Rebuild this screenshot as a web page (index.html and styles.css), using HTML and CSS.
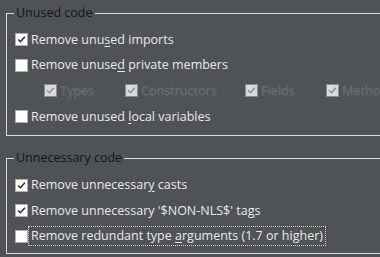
FILE: index.html
```html
<!DOCTYPE html>
<html>
<head>
<meta charset="utf-8">
<link rel="stylesheet" href="styles.css">
</head>
<body>
<fieldset class="group g1">
  <legend class="legend">Unused code</legend>
  <div class="row">
    <span class="box checked"><svg viewBox="0 0 13 13"><path d="M2.5 6.5 L5.2 9.2 L10.5 3.2" /></svg></span>
    <span class="lbl">Remove unu<u>s</u>ed imports</span>
  </div>
  <div class="row">
    <span class="box"></span>
    <span class="lbl">Remove unuse<u>d</u> private members</span>
  </div>
  <div class="row subs">
    <div class="sub"><span class="box dis"><svg viewBox="0 0 13 13"><path d="M2.5 6.5 L5.2 9.2 L10.5 3.2" /></svg></span><span class="lbl dtext">Types</span></div>
    <div class="sub"><span class="box dis"><svg viewBox="0 0 13 13"><path d="M2.5 6.5 L5.2 9.2 L10.5 3.2" /></svg></span><span class="lbl dtext">Constructors</span></div>
    <div class="sub"><span class="box dis"><svg viewBox="0 0 13 13"><path d="M2.5 6.5 L5.2 9.2 L10.5 3.2" /></svg></span><span class="lbl dtext">Fields</span></div>
    <div class="sub"><span class="box dis"><svg viewBox="0 0 13 13"><path d="M2.5 6.5 L5.2 9.2 L10.5 3.2" /></svg></span><span class="lbl dtext">Methods</span></div>
  </div>
  <div class="row">
    <span class="box"></span>
    <span class="lbl">Remove unused <u>l</u>ocal variables</span>
  </div>
</fieldset>
<fieldset class="group g2">
  <legend class="legend">Unnecessary code</legend>
  <div class="row">
    <span class="box checked"><svg viewBox="0 0 13 13"><path d="M2.5 6.5 L5.2 9.2 L10.5 3.2" /></svg></span>
    <span class="lbl">Remove unnecessar<u>y</u> casts</span>
  </div>
  <div class="row">
    <span class="box checked"><svg viewBox="0 0 13 13"><path d="M2.5 6.5 L5.2 9.2 L10.5 3.2" /></svg></span>
    <span class="lbl">Remove unnecessary '$NON-NLS$' ta<u>g</u>s</span>
  </div>
  <div class="row">
    <span class="box"></span>
    <span class="lbl focus">Remove redundant type <u>a</u>rguments (1.7 or higher)</span>
  </div>
</fieldset>
</body>
</html>
```
FILE: styles.css
```css
html, body {
  margin: 0;
  padding: 0;
  background: #505356;
  width: 380px;
  height: 257px;
  overflow: hidden;
}
body {
  font-family: "Open Sans", "Noto Sans", sans-serif;
  font-size: 12.5px;
  color: #e8e8e8;
}
.group {
  margin: 0 0 0 6px;
  width: 420px;
  border: 1px solid #dadada;
  border-right: none;
  padding: 6px 0 6px 8px;
  box-sizing: border-box;
}
.g1 {
  margin-top: 5px;
}
.g2 {
  margin-top: 14px;
  padding-bottom: 4px;
}
.legend {
  color: #151515;
  line-height: 16px;
  padding: 0 2px;
  margin-left: -1px;
}
.row {
  height: 25.6px;
  display: flex;
  align-items: center;
}
.box {
  width: 13px;
  height: 13px;
  box-sizing: border-box;
  background: #ffffff;
  border: 1px solid #b0b0b0;
  flex: none;
  display: flex;
}
.box svg {
  width: 11px;
  height: 11px;
}
.box path {
  fill: none;
  stroke: #2a2a2a;
  stroke-width: 1.7;
}
.box.dis {
  background: #d9d9d9;
  border-color: #8a8c8e;
}
.box.dis path {
  stroke: #8c8c8c;
}
.lbl {
  border: 1px dotted transparent;
  padding: 0 2px;
  line-height: 18px;
  white-space: nowrap;
}
.lbl u {
  text-decoration-thickness: 1px;
  text-underline-offset: 2px;
}
.focus {
  border-color: #d0d0d0;
}
.subs {
  display: grid;
  grid-template-columns: 81px 120px 81px auto;
  padding-left: 29px;
  align-items: center;
}
.sub {
  display: flex;
  align-items: center;
}
.dtext {
  color: #6d7073;
  text-shadow: 1px 1px 0 #5a5d60;
}
```
